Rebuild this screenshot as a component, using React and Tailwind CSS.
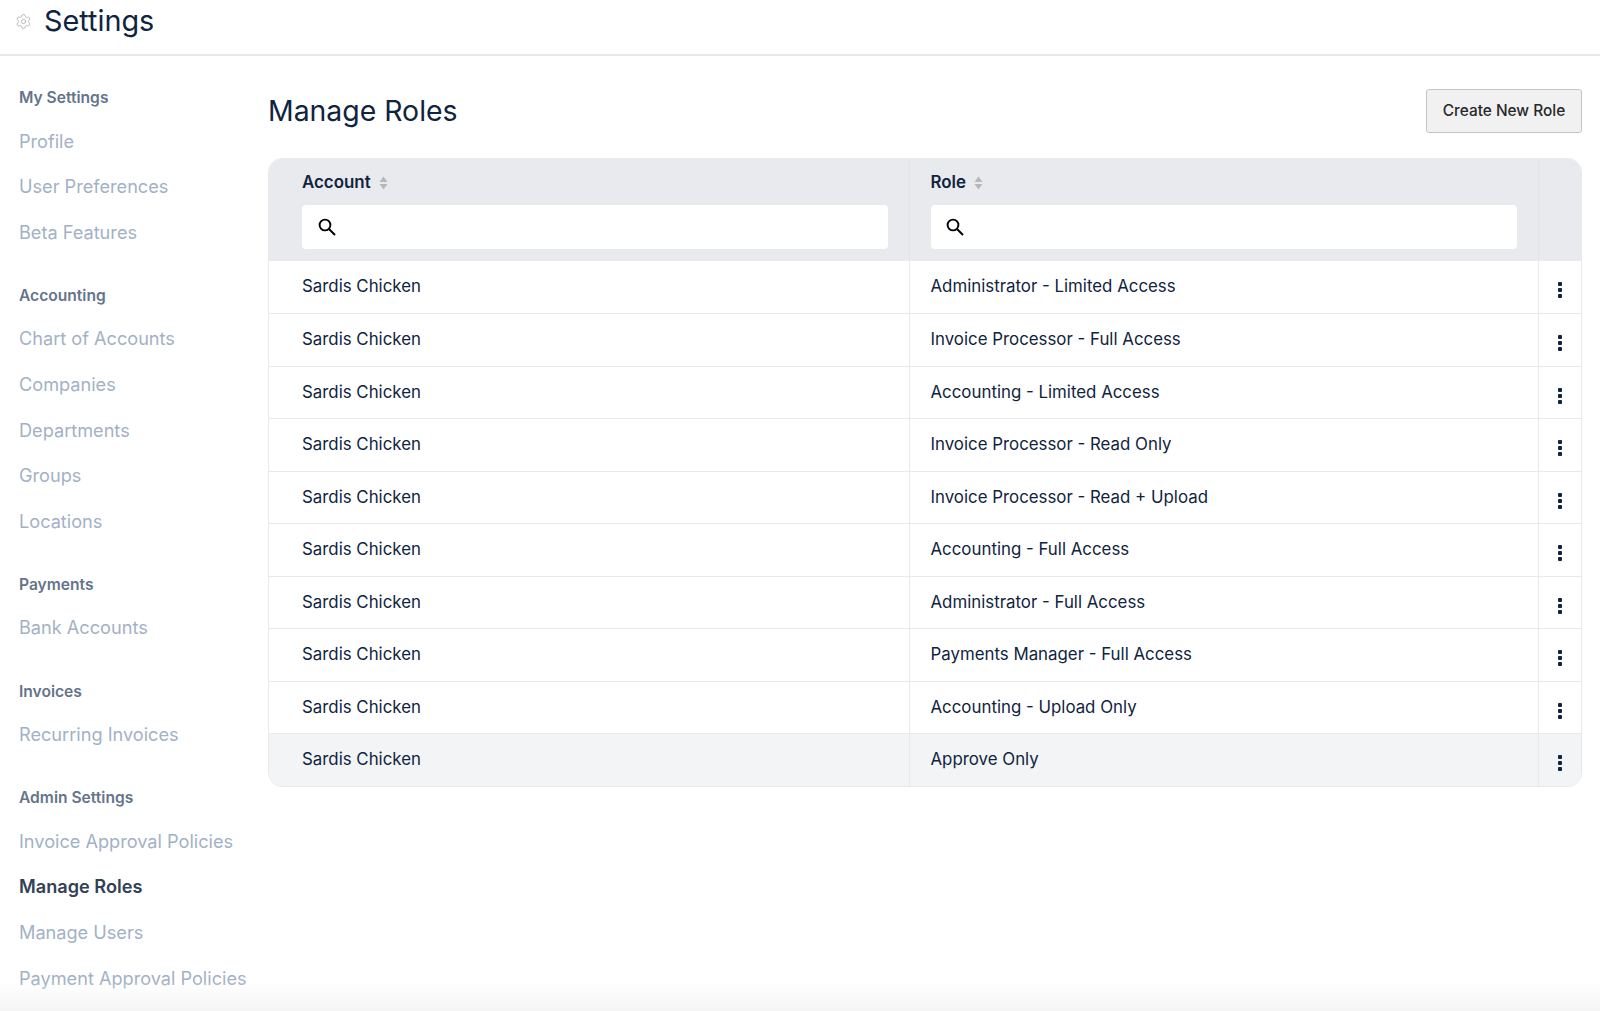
import React from 'react';
import { Settings } from 'lucide-react';

const NAV = [
  { title: 'My Settings', items: ['Profile', 'User Preferences', 'Beta Features'] },
  { title: 'Accounting', items: ['Chart of Accounts', 'Companies', 'Departments', 'Groups', 'Locations'] },
  { title: 'Payments', items: ['Bank Accounts'] },
  { title: 'Invoices', items: ['Recurring Invoices'] },
  { title: 'Admin Settings', items: ['Invoice Approval Policies', 'Manage Roles', 'Manage Users', 'Payment Approval Policies'] },
];

const ROLES = [
  'Administrator - Limited Access',
  'Invoice Processor - Full Access',
  'Accounting - Limited Access',
  'Invoice Processor - Read Only',
  'Invoice Processor - Read + Upload',
  'Accounting - Full Access',
  'Administrator - Full Access',
  'Payments Manager - Full Access',
  'Accounting - Upload Only',
  'Approve Only',
];

const SortIcon = () => (
  <svg width="9" height="14" viewBox="0 0 9 14" className="ml-[8px]" fill="#b4b7bc">
    <path d="M4.5 0.5 L8.5 6 H0.5 Z" />
    <path d="M0.5 8 H8.5 L4.5 13.5 Z" />
  </svg>
);

const SearchIcon = () => (
  <svg width="20" height="20" viewBox="0 0 20 20" fill="none" stroke="#000" strokeWidth="1.9">
    <circle cx="8" cy="8" r="5.4" />
    <path d="M12 12 L18 18" />
  </svg>
);

const DotsIcon = () => (
  <div className="flex flex-col gap-[2px] mt-[7px]">
    <span className="w-[4px] h-[4px] bg-[#0f2440] rounded-[1px]" />
    <span className="w-[4px] h-[4px] bg-[#0f2440] rounded-[1px]" />
    <span className="w-[4px] h-[4px] bg-[#0f2440] rounded-[1px]" />
  </div>
);

const HeaderCell = ({ label, className }) => (
  <div className={`pt-[14px] flex flex-col ${className}`}>
    <div className="flex items-center h-[20px] text-[16.9px] font-semibold text-[#0f2440]">
      {label}
      <SortIcon />
    </div>
    <div className="mt-[12px] h-[44px] bg-white rounded-[4px] flex items-center pl-[14.5px]">
      <SearchIcon />
    </div>
  </div>
);

const App = () => {
  return (
    <div className="relative h-[1011px] overflow-hidden bg-white font-['Inter',sans-serif]">
      {/* top bar */}
      <div className="h-[56px] border-b-2 border-[#e8e8e8] flex items-start pl-[15px]">
        <Settings size={17} strokeWidth={1} color="#a0a0a0" className="mt-[13px]" />
        <h1 className="ml-[12px] mt-[3px] text-[28.8px] leading-[36px] font-normal text-[#0f2440]">Settings</h1>
      </div>

      <div className="flex">
        {/* sidebar */}
        <div className="w-[268px] shrink-0 pl-[19px] pt-[32px]">
          {NAV.map((section) => (
            <div key={section.title} className="mb-[40.2px]">
              <div className="h-[20px] leading-[20px] text-[15.6px] font-semibold text-[#64748b]">{section.title}</div>
              <div className="mt-[18.5px] flex flex-col gap-[17.6px]">
                {section.items.map((item) => (
                  <div
                    key={item}
                    className={`h-[28px] leading-[28px] text-[18.15px] whitespace-nowrap ${
                      item === 'Manage Roles' ? 'font-semibold text-[#334155]' : 'text-[#a3b1c6]'
                    }`}
                  >
                    {item}
                  </div>
                ))}
              </div>
            </div>
          ))}
        </div>

        {/* main */}
        <div className="w-[1314px] pt-[32px]">
          <div className="flex items-start justify-between h-[70px]">
            <h2 className="mt-[5px] text-[28.4px] leading-[36px] font-normal text-[#0f2440]">Manage Roles</h2>
            <button className="mt-[1px] h-[43.5px] w-[156px] bg-[#f1f1f1] border border-[#c4c4c4] rounded-[3px] text-[15.4px] font-medium text-[#27272a]">
              Create New Role
            </button>
          </div>

          <div className="border border-[#e8e9eb] rounded-[14px] overflow-hidden">
            <div className="flex h-[101.5px] bg-[#e9eaed]">
              <HeaderCell label="Account" className="w-[641px] pl-[33px] pr-[21px] border-r border-[#e4e5e8]" />
              <HeaderCell label="Role" className="w-[628.5px] pl-[20.5px] pr-[21px] border-r border-[#e4e5e8]" />
              <div className="flex-1" />
            </div>
            {ROLES.map((role, i) => (
              <div
                key={role}
                className={`flex h-[52.5px] text-[16.85px] text-[#0f2440] border-t border-[#e8e9eb] ${
                  i === ROLES.length - 1 ? 'bg-[#f3f4f6]' : 'bg-white'
                } ${i === 0 ? 'border-t-0' : ''}`}
              >
                <div className="w-[641px] pl-[33px] flex items-center border-r border-[#e8e9eb]">Sardis Chicken</div>
                <div className="w-[628.5px] pl-[20.5px] flex items-center border-r border-[#e8e9eb]">{role}</div>
                <div className="flex-1 flex items-center justify-center">
                  <DotsIcon />
                </div>
              </div>
            ))}
          </div>
        </div>
      </div>

      {/* fade at the bottom of the page */}
      <div className="absolute left-0 right-0 bottom-0 h-[30px] bg-gradient-to-b from-transparent to-[#f5f5f5] pointer-events-none" />
    </div>
  );
};

export default App;
